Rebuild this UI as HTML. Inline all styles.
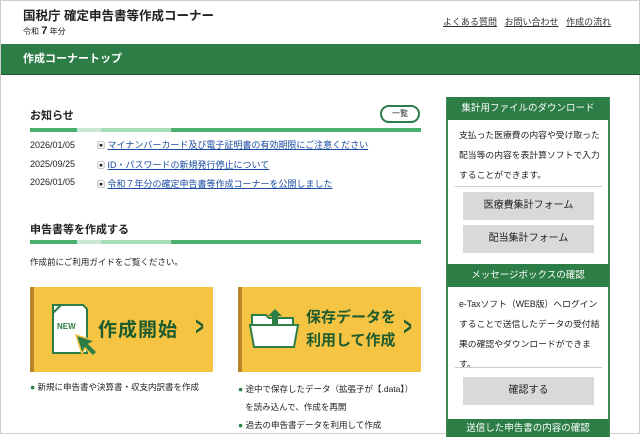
<!DOCTYPE html>
<html><head><meta charset="utf-8"><style>
*{margin:0;padding:0;box-sizing:border-box}
body{width:640px;height:434px;overflow:hidden;background:#fff;font-family:"Liberation Sans","Noto Sans CJK JP",sans-serif;color:#222;position:relative;border:1px solid #ccc}
.a{position:absolute;white-space:nowrap}
a{color:#1a4ba0}
.gb{background:#2d7d46;color:#fff}
.bar{position:absolute;height:4px;background:#4caf6e}
.btn{position:absolute;left:462px;width:131px;height:28px;background:#d9d9d9;font-size:10px;text-align:center;line-height:28px;color:#222}
.sh{position:absolute;left:446px;width:162px;height:23px;font-size:9.5px;text-align:center;line-height:23px}
.sp{position:absolute;left:458px;font-size:8.8px;line-height:20px;white-space:normal;width:142px}
.card{position:absolute;top:286px;height:85px;background:#f5c443;border-left:4px solid #b5862a}
.ct{color:#1e5c2e;font-weight:bold}
</style></head><body>
<div class="a" style="left:22px;top:4px;font-size:12.5px;font-weight:bold">国税庁 確定申告書等作成コーナー</div>
<div class="a" style="left:22px;top:24px;font-size:8px">令和 <b style="font-size:11px">7</b> 年分</div>
<div class="a" style="left:442px;top:14px;font-size:9px;color:#333"><u>よくある質問</u>&nbsp;&nbsp;&nbsp;<u>お問い合わせ</u>&nbsp;&nbsp;&nbsp;<u>作成の流れ</u></div>
<div class="a gb" style="left:0;top:43px;width:640px;height:31px;font-size:11px;font-weight:bold;line-height:31px;padding-left:22px;border-bottom:1px solid #1d5a30">作成コーナートップ</div>

<div class="a" style="left:29px;top:106px;font-size:11px;font-weight:bold">お知らせ</div>
<div class="a" style="left:379px;top:104px;width:40px;height:18px;border:2px solid #2d7d46;border-radius:9px;font-size:8px;text-align:center;line-height:14px">一覧</div>
<div class="bar" style="left:29px;top:127px;width:391px"></div>
<div class="bar" style="left:76px;top:127px;width:24px;background:#c8e8d2"></div>
<div class="bar" style="left:100px;top:127px;width:70px;background:#a8dbb8"></div>
<div class="a" style="left:29px;top:135px;font-size:9px;line-height:18.5px">2026/01/05<br>2025/09/25<br>2026/01/05</div>
<div class="a" style="left:96px;top:135px;font-size:9px;line-height:18.5px"><span style="font-size:8px">▣</span> <a href="#">マイナンバーカード及び電子証明書の有効期限にご注意ください</a><br><span style="font-size:8px">▣</span> <a href="#">ID・パスワードの新規発行停止について</a><br><span style="font-size:8px">▣</span> <a href="#">令和７年分の確定申告書等作成コーナーを公開しました</a></div>

<div class="a" style="left:29px;top:220px;font-size:11px;font-weight:bold">申告書等を作成する</div>
<div class="bar" style="left:29px;top:239px;width:391px"></div>
<div class="bar" style="left:76px;top:239px;width:24px;background:#c8e8d2"></div>
<div class="bar" style="left:100px;top:239px;width:70px;background:#a8dbb8"></div>
<div class="a" style="left:29px;top:255px;font-size:8.5px">作成前にご利用ガイドをご覧ください。</div>

<div class="card" style="left:29px;width:183px">
<svg class="a" style="left:10px;top:12px" width="60" height="62" viewBox="0 0 60 62">
<path d="M9 6h30l4 4v44H9V14z M9 14l8-8" fill="#fff" stroke="#2d7d46" stroke-width="2"/>
<text x="13" y="30" font-size="8" font-weight="bold" fill="#2d7d46" font-family="Liberation Sans">NEW</text>
<path d="M32 36l19 6-6 3 8 8-4 4-8-8-3 6z" fill="#2d7d46" stroke="#f5c443" stroke-width="1.5"/>
</svg>
<div class="a ct" style="left:64px;top:28px;font-size:19px;letter-spacing:1px">作成開始</div>
<div class="a ct" style="left:158px;top:24px;font-size:26px;transform:scaleX(.55)">&gt;</div>
</div>
<div class="card" style="left:237px;width:183px">
<svg class="a" style="left:6px;top:20px" width="52" height="44" viewBox="0 0 52 44">
<path d="M4 8h14l3 3h24v10H4z" fill="#fff" stroke="#2d7d46" stroke-width="2"/>
<path d="M2 18h48l-4 22H6z" fill="#fff" stroke="#2d7d46" stroke-width="2"/>
<path d="M27 2l7 7h-4v8h-6v-8h-4z" fill="#2d7d46"/>
</svg>
<div class="a ct" style="left:64px;top:19px;font-size:15px;line-height:23px">保存データを<br>利用して作成</div>
<div class="a ct" style="left:158px;top:24px;font-size:26px;transform:scaleX(.55)">&gt;</div>
</div>
<div class="a" style="left:29px;top:380px;font-size:8.5px"><span style="color:#2d7d46">●</span> 新規に申告書や決算書・収支内訳書を作成</div>
<div class="a" style="left:237px;top:379px;font-size:8.5px;line-height:18px"><span style="color:#2d7d46">●</span> 途中で保存したデータ（拡張子が【.data】）<br>&nbsp;&nbsp;&nbsp;を読み込んで、作成を再開<br><span style="color:#2d7d46">●</span> 過去の申告書データを利用して作成</div>

<div class="a" style="left:445px;top:96px;width:164px;height:340px;border:2px solid #3f8a56"></div>
<div class="sh gb" style="top:96px">集計用ファイルのダウンロード</div>
<div class="sp" style="top:124px">支払った医療費の内容や受け取った配当等の内容を表計算ソフトで入力することができます。</div>
<div class="a" style="left:454px;top:185px;width:147px;height:1px;background:#ccc"></div>
<div class="btn" style="top:191px">医療費集計フォーム</div>
<div class="btn" style="top:224px">配当集計フォーム</div>
<div class="sh gb" style="top:263px">メッセージボックスの確認</div>
<div class="sp" style="top:293px">e-Taxソフト（WEB版）へログインすることで送信したデータの受付結果の確認やダウンロードができます。</div>
<div class="a" style="left:454px;top:366px;width:147px;height:1px;background:#ccc"></div>
<div class="btn" style="top:376px">確認する</div>
<div class="sh gb" style="top:418px;height:18px;line-height:20px">送信した申告書の内容の確認</div>
</body></html>
